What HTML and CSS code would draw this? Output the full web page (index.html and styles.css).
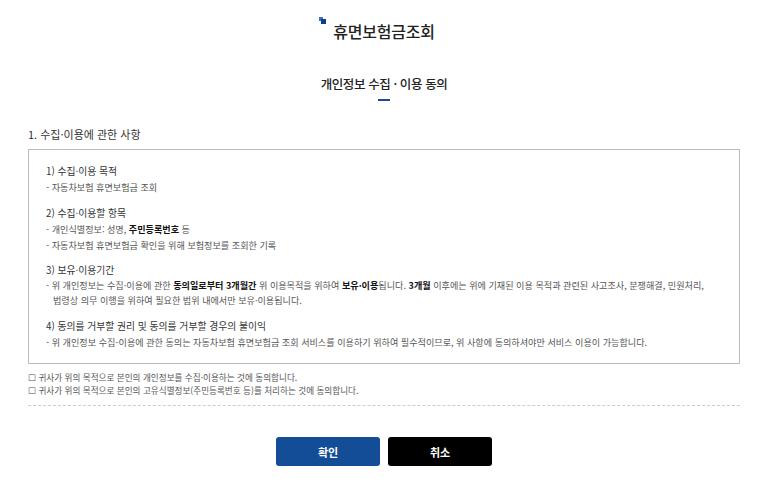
FILE: index.html
```html
<!DOCTYPE html>
<html lang="ko">
<head>
<meta charset="utf-8">
<title>휴면보험금조회</title>
<link rel="stylesheet" href="styles.css">
</head>
<body>
<div class="page">
  <header class="header">
    <h1 class="title"><svg class="title-icon" width="7" height="7" viewBox="0 0 7 7"><rect x="0" y="0" width="4" height="4" fill="#3d6fc2"/><rect x="2" y="2" width="5" height="5" fill="#0d3f91"/></svg>휴면보험금조회</h1>
  </header>
  <h2 class="subtitle">개인정보 수집 · 이용 동의</h2>
  <div class="sub-bar"></div>

  <p class="section-title">1. 수집·이용에 관한 사항</p>
  <div class="terms">
    <div class="group">
      <p class="g-head">1) 수집·이용 목적</p>
      <p class="g-item">- 자동차보험 휴면보험금 조회</p>
    </div>
    <div class="group">
      <p class="g-head">2) 수집·이용할 항목</p>
      <p class="g-item">- 개인식별정보: 성명, <b>주민등록번호</b> 등</p>
      <p class="g-item">- 자동차보험 휴면보험금 확인을 위해 보험정보를 조회한 기록</p>
    </div>
    <div class="group group-tight">
      <p class="g-head">3) 보유·이용기간</p>
      <p class="g-item g-wrap">- 위 개인정보는 수집·이용에 관한 <b>동의일로부터 3개월간</b> 위 이용목적을 위하여 <b>보유·이용</b>됩니다. <b>3개월</b> 이후에는 위에 기재된 이용 목적과 관련된 사고조사, 분쟁해결, 민원처리, 법령상 의무 이행을 위하여 필요한 범위 내에서만 보유·이용됩니다.</p>
    </div>
    <div class="group">
      <p class="g-head">4) 동의를 거부할 권리 및 동의를 거부할 경우의 불이익</p>
      <p class="g-item">- 위 개인정보 수집-이용에 관한 동의는 자동차보험 휴면보험금 조회 서비스를 이용하기 위하여 필수적이므로, 위 사항에 동의하셔야만 서비스 이용이 가능합니다.</p>
    </div>
  </div>

  <ul class="checks">
    <li>☐ 귀사가 위의 목적으로 본인의 개인정보를 수집·이용하는 것에 동의합니다.</li>
    <li>☐ 귀사가 위의 목적으로 본인의 고유식별정보(주민등록번호 등)를 처리하는 것에 동의합니다.</li>
  </ul>
  <div class="divider"></div>

  <div class="buttons">
    <button class="btn btn-ok">확인</button>
    <button class="btn btn-cancel">취소</button>
  </div>
</div>
</body>
</html>
```

FILE: styles.css
```css
* { box-sizing: border-box; }
html, body { margin: 0; padding: 0; background: #fff; }
body {
  font-family: "Noto Sans CJK KR", "Noto Sans", sans-serif;
  color: #333;
}
.page {
  width: 712px;
  margin-left: 28px;
}
p { margin: 0; }
.header {
  padding-top: 20px;
  display: flex;
  justify-content: center;
}
.title {
  position: relative;
  margin: 0;
  font-size: 16px;
  line-height: 22px;
  font-weight: 500;
  color: #222;
  letter-spacing: -0.2px;
}
.title-icon {
  position: absolute;
  left: -14px;
  top: -3px;
}
.subtitle {
  margin: 33px 0 0;
  text-align: center;
  font-size: 12.5px;
  line-height: 18px;
  font-weight: 500;
  color: #222;
  letter-spacing: -0.4px;
}
.sub-bar {
  width: 12px;
  height: 2px;
  background: #134c97;
  margin: 6px auto 0;
}
.section-title {
  margin-top: 25px;
  font-size: 11px;
  line-height: 16px;
  color: #333;
}
.terms {
  margin-top: 7px;
  height: 215px;
  border: 1px solid #bbb;
  padding: 13px 17px 0;
}
.group + .group { margin-top: 10px; }
.group + .group-tight { margin-top: 9px; }
.g-head {
  font-size: 9.8px;
  line-height: 16px;
  color: #333;
}
.g-item {
  font-size: 9.1px;
  line-height: 16px;
  color: #555;
  padding-left: 7px;
  text-indent: -7px;
  word-break: keep-all;
}
.g-wrap { line-height: 15px; }
.g-item b { color: #111; font-weight: 700; }
.checks {
  list-style: none;
  margin: 7px 0 0;
  padding: 0;
  font-size: 8.6px;
  line-height: 13px;
  color: #555;
}
.divider {
  margin-top: 8px;
  border-top: 1px dashed #ccc;
}
.buttons {
  margin-top: 31px;
  display: flex;
  justify-content: center;
  gap: 8px;
}
.btn {
  width: 104px;
  height: 29px;
  border: 0;
  border-radius: 3px;
  color: #fff;
  font-family: inherit;
  font-size: 11px;
  font-weight: 700;
  padding: 0;
}
.btn-ok { background: #134c97; }
.btn-cancel { background: #000; }
```
